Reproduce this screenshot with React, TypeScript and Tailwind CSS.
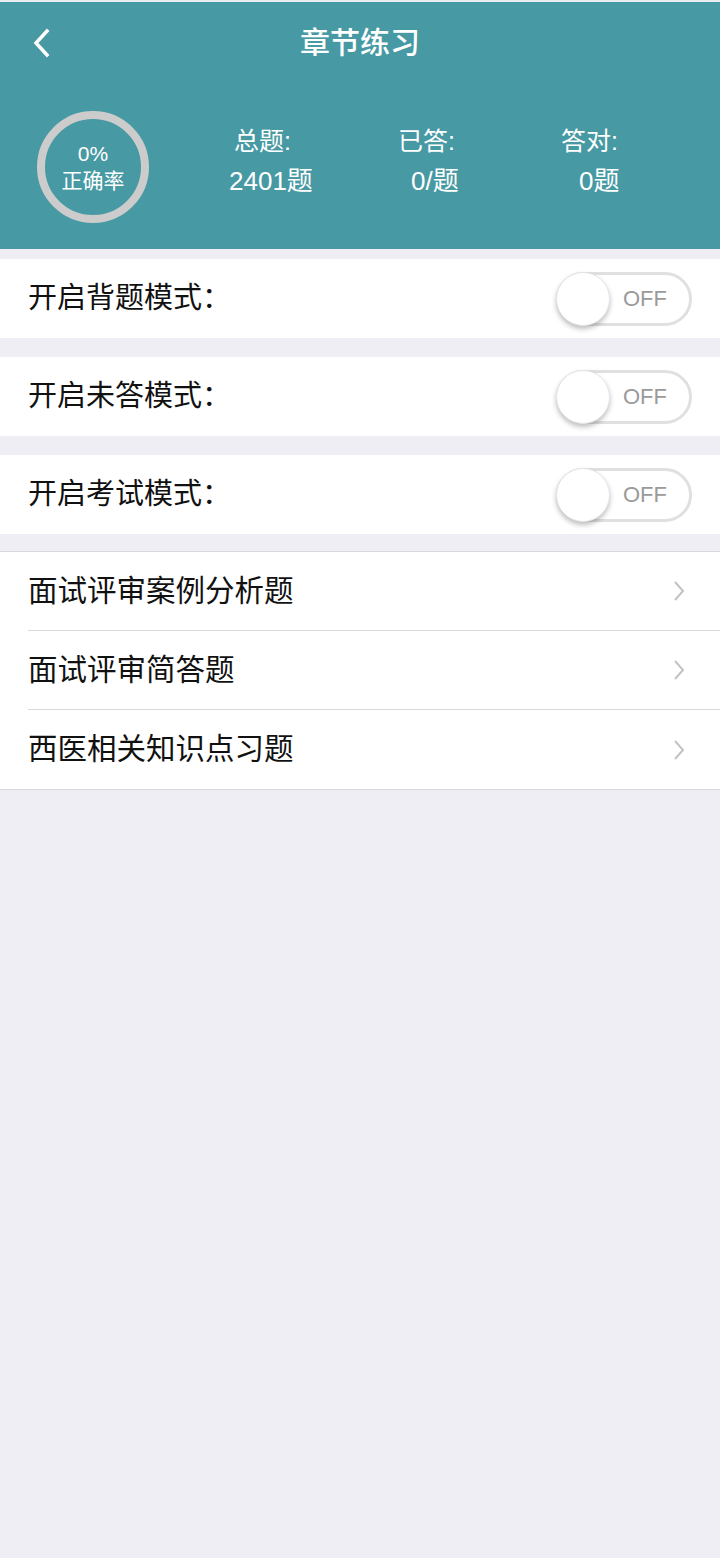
const font = { fontFamily: '"Liberation Sans", "Noto Sans CJK SC", sans-serif' }

const modes = ['开启背题模式：', '开启未答模式：', '开启考试模式：']
const chapters = ['面试评审案例分析题', '面试评审简答题', '西医相关知识点习题']

function Toggle() {
  return (
    <div className="relative w-[136px] h-[54px] rounded-full border-[3px] border-[#e0e0e0] bg-white flex items-center justify-end pr-[22px]">
      <span className="text-[22px] text-[#9a9a9a]">OFF</span>
      <div className="absolute -left-[3px] -top-[3px] w-[54px] h-[54px] rounded-full bg-white border border-[#e6e6e6] shadow-[0_3px_5px_rgba(0,0,0,0.25)]" />
    </div>
  )
}

export default function App() {
  return (
    <div className="w-[720px] min-h-[1558px] bg-[#efeef4]" style={font}>
      {/* Header */}
      <div className="border-t-2 border-[#e8eef0] bg-[#4799a3] h-[249px] text-white">
        <div className="relative h-[80px] flex items-center justify-center">
          <svg className="absolute left-[32px] top-[26px]" width="20" height="30" viewBox="0 0 20 30">
            <path d="M15 3 L4 15 L15 27" fill="none" stroke="white" strokeWidth="3.5" strokeLinecap="square" />
          </svg>
          <span className="text-[30px] font-medium">章节练习</span>
        </div>
        <div className="flex items-center pl-[37px] pt-[29px]">
          <div className="w-[112px] h-[112px] rounded-full border-[8px] border-[#cccccc] flex flex-col items-center justify-center leading-[27px]">
            <span className="text-[21px]">0%</span>
            <span className="text-[21px]">正确率</span>
          </div>
          <div className="flex ml-[62px] mb-[12px] text-[25px] leading-[40px]">
            <div className="w-[164px] flex flex-col items-start pl-[18px]">
              <span className="pl-[5px]">总题:</span>
              <span className="text-[26px]">2401题</span>
            </div>
            <div className="w-[164px] flex flex-col items-start pl-[23px]">
              <span>已答:</span>
              <span className="pl-[13px] text-[26px]">0/题</span>
            </div>
            <div className="w-[120px] flex flex-col items-start pl-[22px]">
              <span>答对:</span>
              <span className="pl-[18px] text-[26px]">0题</span>
            </div>
          </div>
        </div>
      </div>

      {/* Mode toggles */}
      <div className="pt-[10px] flex flex-col gap-[19px]">
        {modes.map((m) => (
          <div key={m} className="bg-white h-[79px] flex items-center justify-between pl-[28px] pr-[28px]">
            <span className="text-[29px] text-[#111]">{m}</span>
            <Toggle />
          </div>
        ))}
      </div>

      {/* Chapters */}
      <div className="mt-[17px] bg-white border-y border-[#d9d9dd]">
        {chapters.map((c, i) => (
          <div key={c} className="pl-[28px]">
            <div className={`h-[79px] flex items-center justify-between pr-[35px] ${i < chapters.length - 1 ? 'border-b border-[#d9d9dd]' : ''}`}>
              <span className="text-[29.5px] text-[#111]">{c}</span>
              <svg width="12" height="22" viewBox="0 0 12 22">
                <path d="M2 2 L10 11 L2 20" fill="none" stroke="#c2c2c6" strokeWidth="2" />
              </svg>
            </div>
          </div>
        ))}
      </div>
    </div>
  )
}
